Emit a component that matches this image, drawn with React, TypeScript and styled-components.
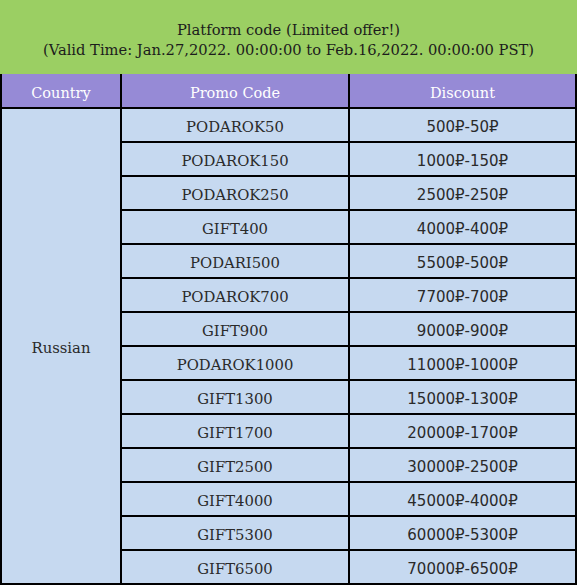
import React from "react";
import styled, { createGlobalStyle } from "styled-components";

const GlobalStyle = createGlobalStyle`
  html, body { margin: 0; padding: 0; background: #ffffff; }
  #root { width: 577px; }
`;

const Wrapper = styled.div`
  width: 577px;
  display: flex;
  flex-direction: column;
`;

const Banner = styled.div`
  height: 74px;
  background: #9bcf63;
  display: flex;
  flex-direction: column;
  align-items: center;
  justify-content: center;
  font-family: "DejaVu Serif", "Liberation Serif", serif;
  font-size: 14.7px;
  line-height: 20px;
  color: #1c1c1c;
  padding-top: 5px;
  box-sizing: border-box;
`;

const Grid = styled.div`
  display: grid;
  grid-template-columns: 118px 226px 1fr;
  grid-template-rows: 33px repeat(14, 32px);
  gap: 2px;
  padding: 0 2px 2px 2px;
  background: #000;
`;

const HeadCell = styled.div`
  background: #968ad6;
  color: #ffffff;
  display: flex;
  align-items: center;
  justify-content: center;
  padding-top: 4px;
  font-family: "DejaVu Serif", "Liberation Serif", serif;
  font-size: 14.5px;
`;

const Cell = styled.div<{ $sans?: boolean; $span?: number }>`
  background: #c6d9f0;
  color: #2a2a2a;
  display: flex;
  align-items: center;
  justify-content: center;
  padding-top: 3px;
  font-family: ${(p) =>
    p.$sans
      ? `"DejaVu Sans", "Liberation Sans", sans-serif`
      : `"DejaVu Serif", "Liberation Serif", serif`};
  font-size: ${(p) => (p.$sans ? "15px" : "14.8px")};
  ${(p) => (p.$span ? `grid-row: span ${p.$span};` : "")}
`;

const rows: [string, string][] = [
  ["PODAROK50", "500₽-50₽"],
  ["PODAROK150", "1000₽-150₽"],
  ["PODAROK250", "2500₽-250₽"],
  ["GIFT400", "4000₽-400₽"],
  ["PODARI500", "5500₽-500₽"],
  ["PODAROK700", "7700₽-700₽"],
  ["GIFT900", "9000₽-900₽"],
  ["PODAROK1000", "11000₽-1000₽"],
  ["GIFT1300", "15000₽-1300₽"],
  ["GIFT1700", "20000₽-1700₽"],
  ["GIFT2500", "30000₽-2500₽"],
  ["GIFT4000", "45000₽-4000₽"],
  ["GIFT5300", "60000₽-5300₽"],
  ["GIFT6500", "70000₽-6500₽"],
];

export default function App() {
  return (
    <>
      <GlobalStyle />
      <Wrapper>
        <Banner>
          <div>Platform code (Limited offer!)</div>
          <div>(Valid Time: Jan.27,2022. 00:00:00 to Feb.16,2022. 00:00:00 PST)</div>
        </Banner>
        <Grid>
          <HeadCell>Country</HeadCell>
          <HeadCell>Promo Code</HeadCell>
          <HeadCell>Discount</HeadCell>
          {rows.map(([code, discount], i) => (
            <React.Fragment key={code}>
              {i === 0 && <Cell $span={rows.length}>Russian</Cell>}
              <Cell>{code}</Cell>
              <Cell $sans>{discount}</Cell>
            </React.Fragment>
          ))}
        </Grid>
      </Wrapper>
    </>
  );
}
